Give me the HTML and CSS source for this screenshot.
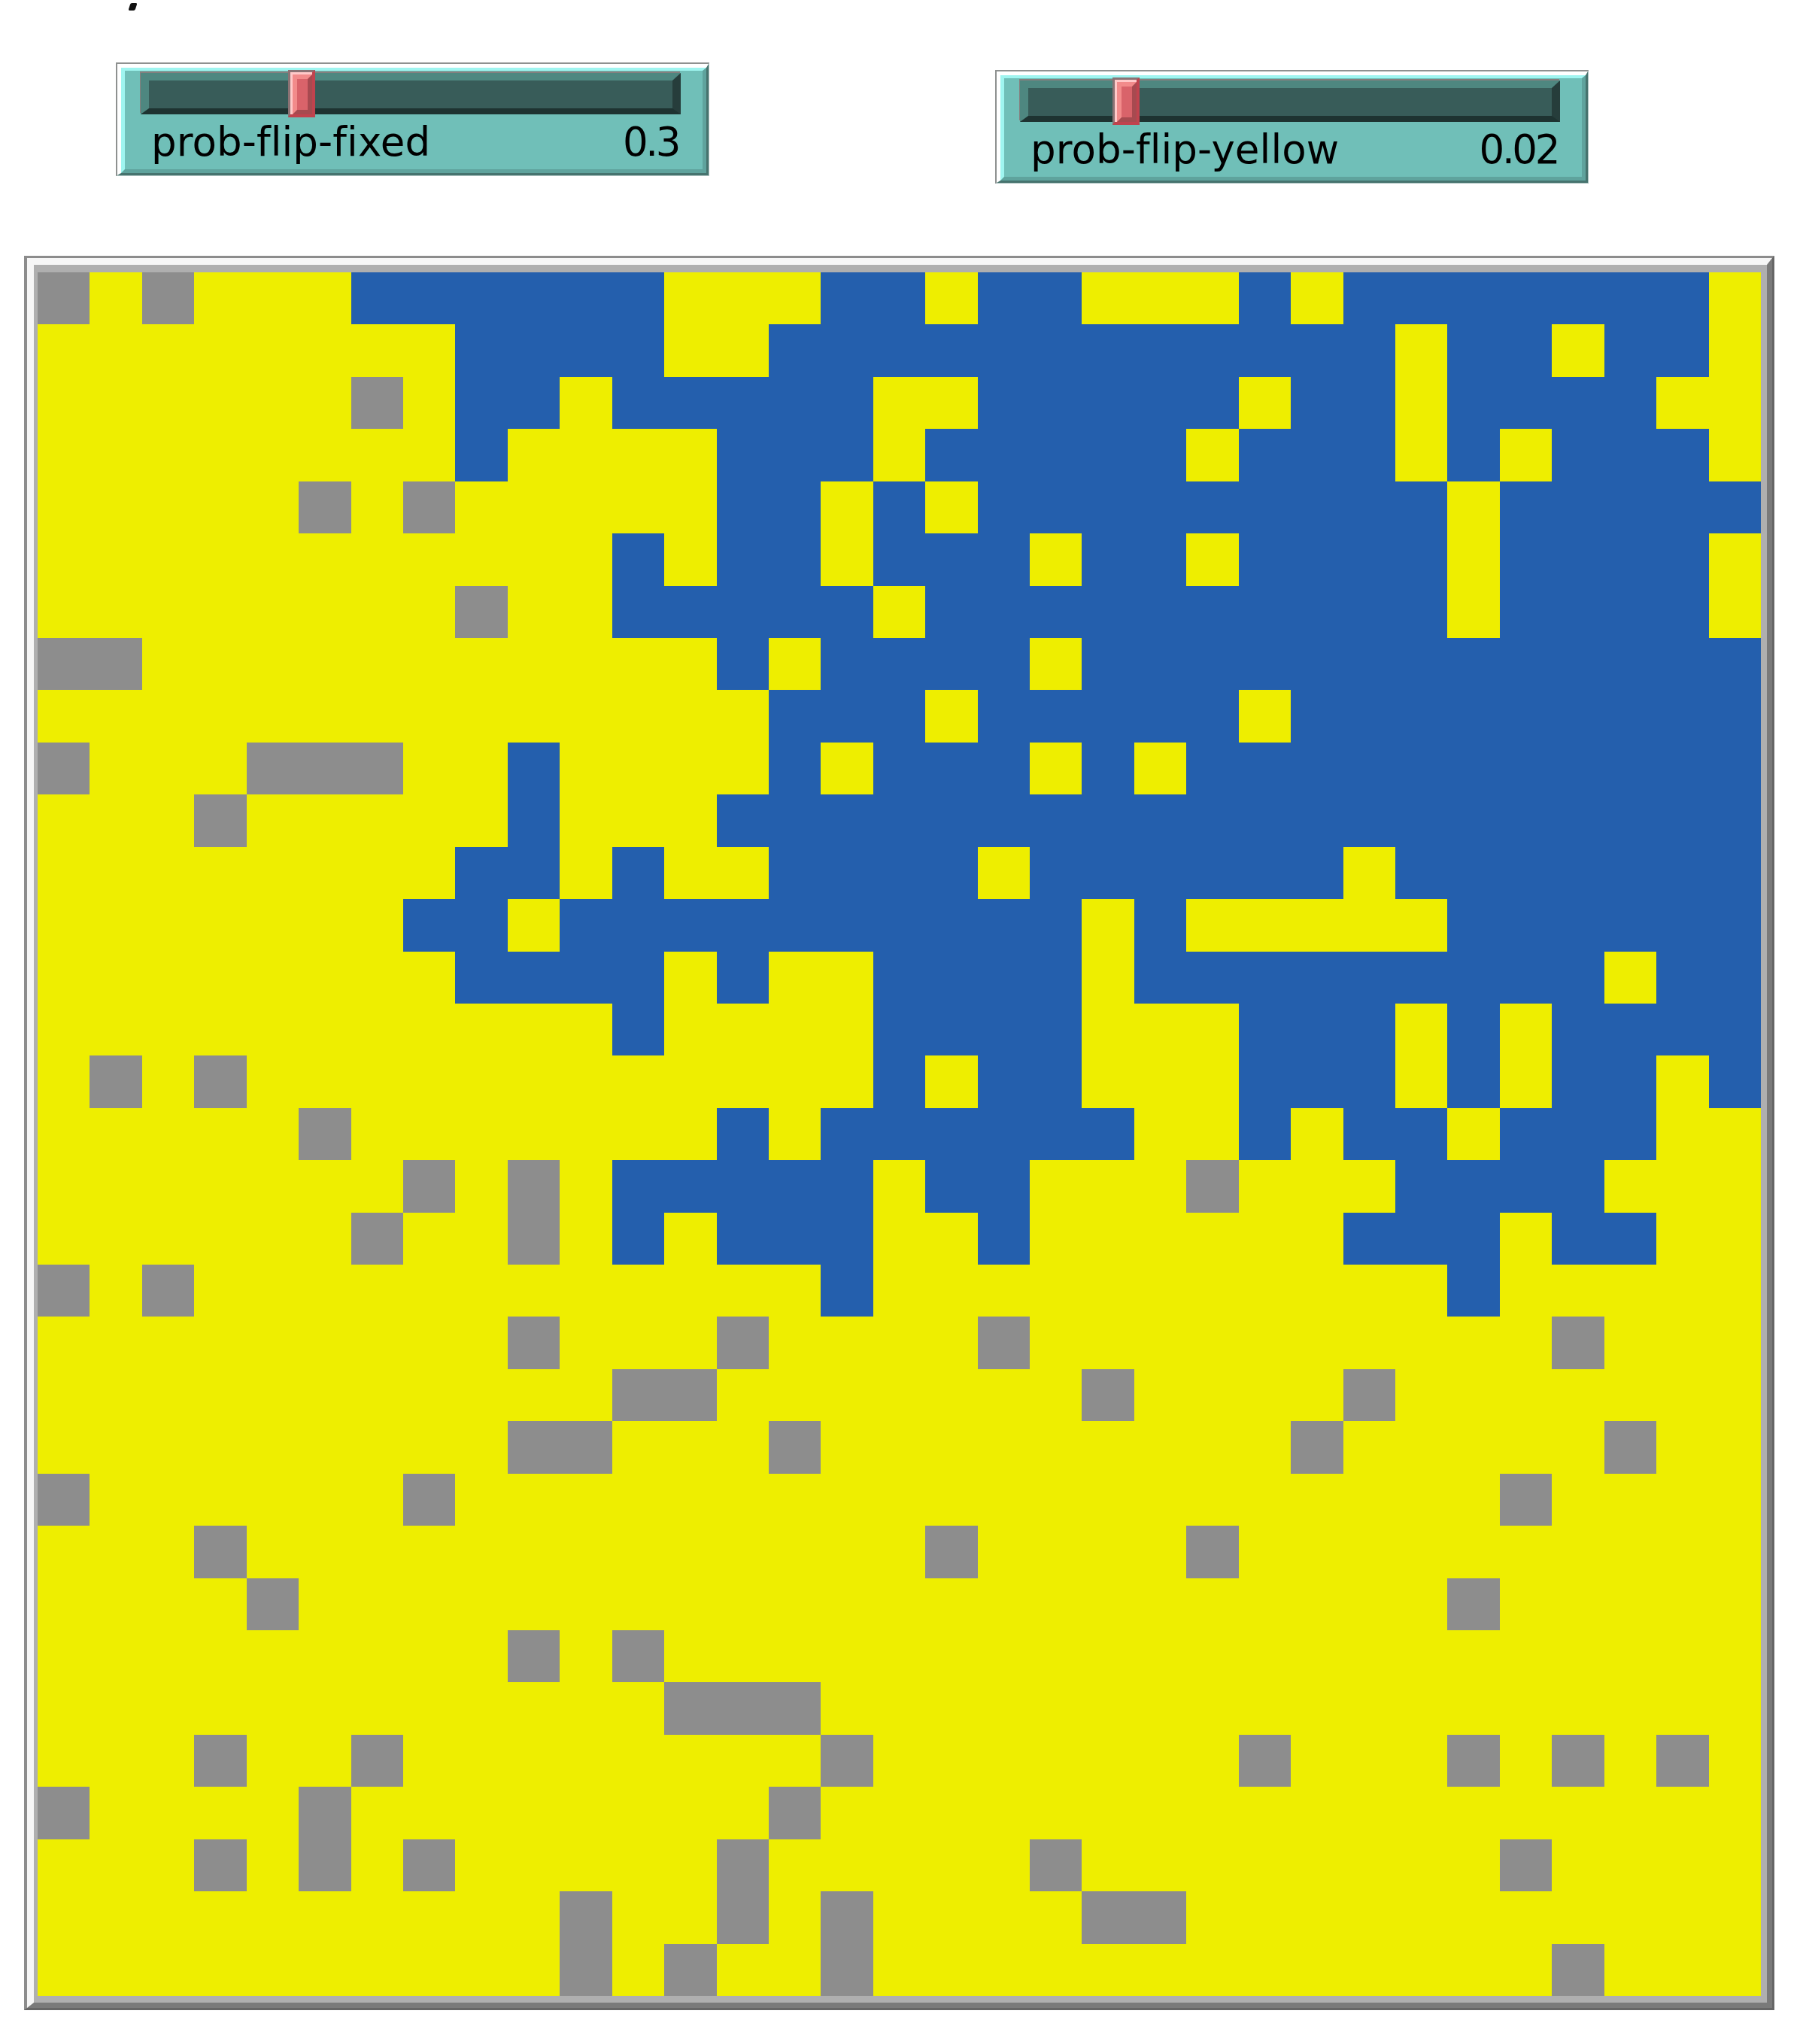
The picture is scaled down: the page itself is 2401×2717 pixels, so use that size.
FILE: index.html
```html
<!DOCTYPE html>
<html lang="en">
<head>
	<meta charset="UTF-8">
	<title>prob-flip</title>
	<link rel="stylesheet" href="styles.css">
</head>

<body>
<div class="stray-mark"></div>

<div class="controls">
	<div class="slider">
		<div class="slider-frame">
			<div class="slider-body">
				<div class="slider-track">
					<div class="groove"></div>
					<div class="thumb" style="left: 196px"><div class="thumb-face"><div class="thumb-core"></div></div></div>
				</div>
				<div class="slider-label">
					<span>prob-flip-fixed</span>
					<span class="slider-value">0.3</span>
				</div>
			</div>
		</div>
	</div>

	<div class="slider slider-low">
		<div class="slider-frame">
			<div class="slider-body">
				<div class="slider-track">
					<div class="groove"></div>
					<div class="thumb" style="left: 123px"><div class="thumb-face"><div class="thumb-core"></div></div></div>
				</div>
				<div class="slider-label">
					<span>prob-flip-yellow</span>
					<span class="slider-value">0.02</span>
				</div>
			</div>
		</div>
	</div>
</div>

<div class="view">
	<div class="view-bevel">
		<div class="view-inset">
			<div id="world" class="world"></div>
		</div>
	</div>
</div>

<script src="script.js"></script>
</body>
</html>
```

FILE: styles.css
```css
html, body {
	margin: 0;
	padding: 0;
	background: #fff;
}
body {
	height: 2717px;
	overflow: hidden;
	font-family: "DejaVu Sans", sans-serif;
}
.stray-mark {
	width: 9px;
	height: 10px;
	margin: 4px 0 0 172px;
	background: #111;
	border-radius: 2px;
	transform: skewX(-18deg);
}

/* sliders */
.controls {
	display: flex;
	align-items: flex-start;
	gap: 380px;
	margin: 69px 0 0 154px;
}
.slider {
	box-sizing: border-box;
	width: 789px;
	height: 151px;
	border-style: solid;
	border-width: 2px 1px 1px 2px;
	border-color: #8e9190 #a9c0bd #a9c0bd #8e9190;
}
.slider-low {
	margin-top: 10px;
}
.slider-frame {
	box-sizing: border-box;
	height: 100%;
	border-style: solid;
	border-width: 5px 3px 3px 5px;
	border-color: #fff #46736e #46736e #fff;
}
.slider-body {
	box-sizing: border-box;
	height: 100%;
	padding: 3px 29px 0 21px;
	border-style: solid;
	border-width: 4px 5px 5px 5px;
	border-color: #9ff5f0 #5fa39d #5fa39d #9ff5f0;
	background: #70bfb8;
}
.slider-track {
	position: relative;
	height: 55px;
}
.groove {
	box-sizing: border-box;
	height: 100%;
	border-style: solid;
	border-width: 10px 11px 8px 11px;
	border-color: #4e8780 #263d3b #1e3331 #4e8780;
	background: #385c59;
	box-shadow: -1px -2px 0 #85807f;
}
.thumb {
	box-sizing: border-box;
	position: absolute;
	top: -4px;
	width: 36px;
	height: 63px;
	border-style: solid;
	border-width: 3px 4px 4px 3px;
	border-color: #8b7274 #c0434e #c0434e #8b7274;
}
.thumb-face {
	box-sizing: border-box;
	height: 100%;
	border-style: solid;
	border-width: 3px 0 0 3px;
	border-color: #ffc9c9;
}
.thumb-core {
	box-sizing: border-box;
	height: 100%;
	border-style: solid;
	border-width: 6px;
	border-color: #f28b8b #a74a50 #a74a50 #f28b8b;
	background: #d9636a;
}
.slider-label {
	display: flex;
	justify-content: space-between;
	align-items: baseline;
	margin-top: 7px;
	padding: 0 3px 0 14px;
	font-size: 53px;
	line-height: 60px;
	letter-spacing: 0.1px;
	color: #000;
}
.slider-value {
	letter-spacing: -3.4px;
}

/* world view */
.view {
	box-sizing: border-box;
	width: 2327px;
	height: 2332px;
	margin: 96px 0 0 32px;
	border-style: solid;
	border-width: 3px 3px 3px 4px;
	border-color: #8c8c8c #666 #666 #8c8c8c;
}
.view-bevel {
	box-sizing: border-box;
	height: 100%;
	border-style: solid;
	border-width: 9px 7px 7px 9px;
	border-color: #f6f6f6 #7a7a7a #7a7a7a #f6f6f6;
}
.view-inset {
	box-sizing: border-box;
	height: 100%;
	border-style: solid;
	border-width: 10px 8px 9px 5px;
	border-color: #afafaf;
}
.world {
	display: grid;
	grid-template-columns: repeat(33, 1fr);
	grid-template-rows: repeat(33, 1fr);
	width: 2291px;
	height: 2291px;
}
.y { background: #eeee00; }
.b { background: #245fad; }
.g { background: #8d8d8d; }
```

FILE: script.js
```js
window.onload = function(){
	// one string per row of patches: colour + how many in a run
	var rows = [
		'g1 y1 g1 y3 b6 y3 b2 y1 b2 y3 b1 y1 b7 y1',
		'y8 b4 y2 b12 y1 b2 y1 b2 y1',
		'y6 g1 y1 b2 y1 b5 y2 b5 y1 b2 y1 b4 y2',
		'y8 b1 y4 b3 y1 b5 y1 b3 y1 b1 y1 b3 y1',
		'y5 g1 y1 g1 y5 b2 y1 b1 y1 b9 y1 b5',
		'y11 b1 y1 b2 y1 b3 y1 b2 y1 b4 y1 b4 y1',
		'y8 g1 y2 b5 y1 b10 y1 b4 y1',
		'g2 y11 b1 y1 b4 y1 b13',
		'y14 b3 y1 b5 y1 b9',
		'g1 y3 g3 y2 b1 y4 b1 y1 b3 y1 b1 y1 b11',
		'y3 g1 y5 b1 y3 b20',
		'y8 b2 y1 b1 y2 b4 y1 b6 y1 b7',
		'y7 b2 y1 b10 y1 b1 y5 b6',
		'y8 b4 y1 b1 y2 b4 y1 b9 y1 b2',
		'y11 b1 y4 b4 y3 b3 y1 b1 y1 b4',
		'y1 g1 y1 g1 y12 b1 y1 b2 y3 b3 y1 b1 y1 b2 y1 b1',
		'y5 g1 y7 b1 y1 b6 y2 b1 y1 b2 y1 b3 y2',
		'y7 g1 y1 g1 y1 b5 y1 b2 y3 g1 y3 b4 y3',
		'y6 g1 y2 g1 y1 b1 y1 b3 y2 b1 y6 b3 y1 b2 y2',
		'g1 y1 g1 y12 b1 y11 b1 y5',
		'y9 g1 y3 g1 y4 g1 y10 g1 y3',
		'y11 g2 y7 g1 y4 g1 y7',
		'y9 g2 y3 g1 y9 g1 y5 g1 y2',
		'g1 y6 g1 y20 g1 y4',
		'y3 g1 y13 g1 y4 g1 y10',
		'y4 g1 y22 g1 y5',
		'y9 g1 y1 g1 y21',
		'y12 g3 y18',
		'y3 g1 y2 g1 y8 g1 y7 g1 y3 g1 y1 g1 y1 g1 y1',
		'g1 y4 g1 y8 g1 y18',
		'y3 g1 y1 g1 y1 g1 y5 g1 y5 g1 y8 g1 y4',
		'y10 g1 y2 g1 y1 g1 y4 g2 y11',
		'y10 g1 y1 g1 y2 g1 y13 g1 y3'
	];

	var oWorld = document.getElementById('world');

	for(var i=0; i<rows.length; i++){
		var aRun = rows[i].split(' ');
		for(var j=0; j<aRun.length; j++){
			var oPatch = document.createElement('div');
			oPatch.className = aRun[j].charAt(0);
			oPatch.style.gridColumn = 'span ' + aRun[j].substring(1);
			oWorld.appendChild(oPatch);
		}
	}
};
```
